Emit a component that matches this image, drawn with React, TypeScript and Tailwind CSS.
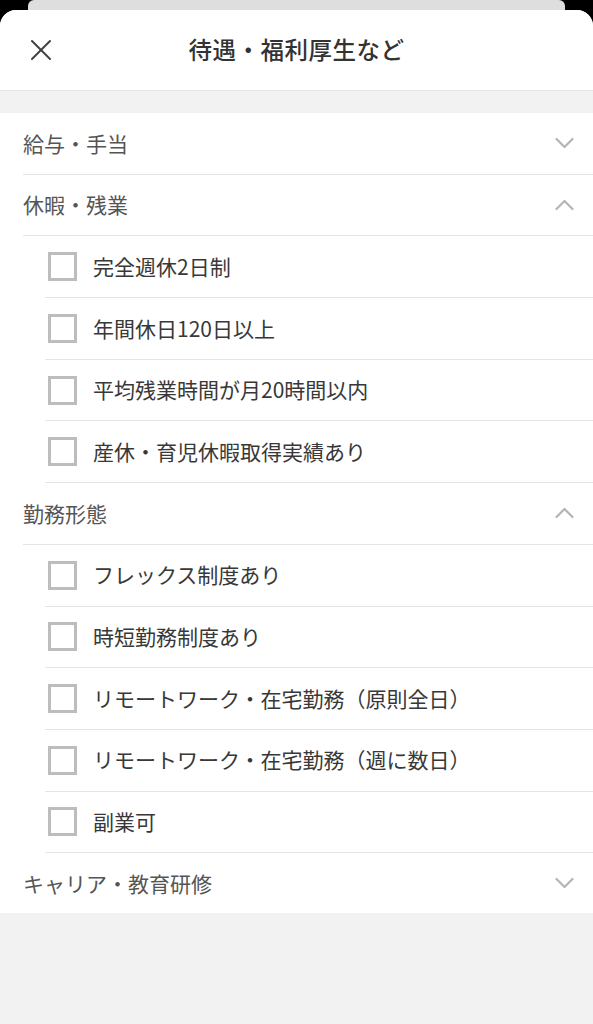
import React from "react";

// Data for the filter sections
interface Section {
  label: string;
  open: boolean;
  items: string[];
}

const sections: Section[] = [
  { label: "給与・手当", open: false, items: [] },
  {
    label: "休暇・残業",
    open: true,
    items: ["完全週休2日制", "年間休日120日以上", "平均残業時間が月20時間以内", "産休・育児休暇取得実績あり"],
  },
  {
    label: "勤務形態",
    open: true,
    items: [
      "フレックス制度あり",
      "時短勤務制度あり",
      "リモートワーク・在宅勤務（原則全日）",
      "リモートワーク・在宅勤務（週に数日）",
      "副業可",
    ],
  },
  { label: "キャリア・教育研修", open: false, items: [] },
];

function Chevron({ up }: { up: boolean }) {
  return (
    <svg width="19" height="12" viewBox="0 0 19 12" fill="none" stroke="#b4b4b4" strokeWidth="2.2" strokeLinecap="round" strokeLinejoin="round">
      {up ? <polyline points="1.5,10 9.5,2 17.5,10" /> : <polyline points="1.5,2 9.5,10 17.5,2" />}
    </svg>
  );
}

export default function App() {
  return (
    <div className="h-screen flex flex-col bg-black overflow-hidden" style={{ fontFamily: '"Noto Sans CJK JP", "Noto Sans", sans-serif' }}>
      {/* stacked sheet behind */}
      <div className="h-[10px] mx-[28px] bg-[#dedede] rounded-t-[6px] shrink-0"></div>

      <div className="flex-1 flex flex-col bg-[#f2f2f2] rounded-t-[16px] overflow-hidden">
        {/* Header */}
        <div className="relative h-[81px] shrink-0 bg-white border-b border-[#e6e6e6] flex items-center justify-center">
          <svg className="absolute left-[30px] top-[29px]" width="22" height="22" viewBox="0 0 22 22" fill="none" stroke="#404040" strokeWidth="2" strokeLinecap="round">
            <line x1="2" y1="2" x2="20" y2="20" />
            <line x1="20" y1="2" x2="2" y2="20" />
          </svg>
          <h1 className="text-[23.5px] font-medium text-[#333] tracking-[0.5px]">待遇・福利厚生など</h1>
        </div>

        <div className="h-[22px] shrink-0"></div>

        {/* List */}
        <div className="bg-white shrink-0">
          {sections.map((section, si) => {
            const last = si === sections.length - 1;
            return (
              <div key={si}>
                <div
                  className={`ml-[23px] flex items-center justify-between pr-[19px] ${
                    last ? "h-[60px]" : "h-[61.7px] border-b border-[#e4e4e4]"
                  }`}
                >
                  <span className="text-[21px] text-[#555]">{section.label}</span>
                  <Chevron up={section.open} />
                </div>
                {section.open &&
                  section.items.map((item, ii) => (
                    <div key={ii} className="ml-[45px] pl-[3px] h-[61.7px] flex items-center gap-4 border-b border-[#e4e4e4]">
                      <div className="w-[29px] h-[29px] border-[3px] border-[#bdbdbd] shrink-0"></div>
                      <span className="text-[21px] text-[#383838]">{item}</span>
                    </div>
                  ))}
              </div>
            );
          })}
        </div>
      </div>
    </div>
  );
}
